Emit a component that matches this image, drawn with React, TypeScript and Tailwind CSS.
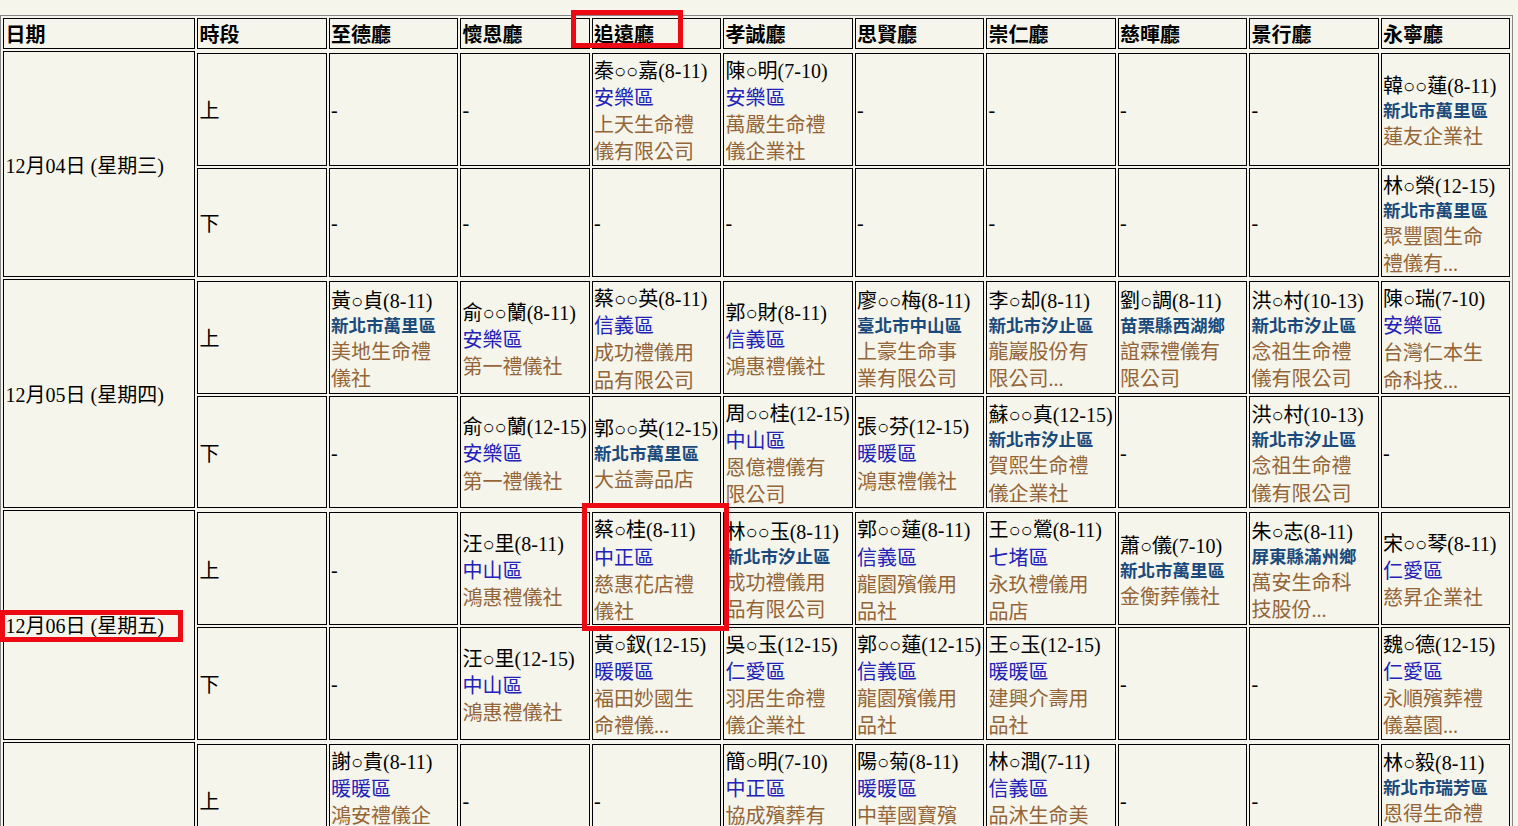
interface Booking {
  n: string
  d: string
  bold?: boolean
  c: string[]
}

type Cell = Booking | null

interface DayRow {
  date: string
  am: Cell[]
  pm?: Cell[]
}

const halls = ['至德廳', '懷恩廳', '追遠廳', '孝誠廳', '思賢廳', '崇仁廳', '慈暉廳', '景行廳', '永寧廳']

const days: DayRow[] = [
  {
    date: '12月04日 (星期三)',
    am: [
      null,
      null,
      { n: '秦○○嘉(8-11)', d: '安樂區', c: ['上天生命禮', '儀有限公司'] },
      { n: '陳○明(7-10)', d: '安樂區', c: ['萬嚴生命禮', '儀企業社'] },
      null,
      null,
      null,
      null,
      { n: '韓○○蓮(8-11)', d: '新北市萬里區', bold: true, c: ['蓮友企業社'] },
    ],
    pm: [
      null,
      null,
      null,
      null,
      null,
      null,
      null,
      null,
      { n: '林○榮(12-15)', d: '新北市萬里區', bold: true, c: ['聚豐園生命', '禮儀有...'] },
    ],
  },
  {
    date: '12月05日 (星期四)',
    am: [
      { n: '黃○貞(8-11)', d: '新北市萬里區', bold: true, c: ['美地生命禮', '儀社'] },
      { n: '俞○○蘭(8-11)', d: '安樂區', c: ['第一禮儀社'] },
      { n: '蔡○○英(8-11)', d: '信義區', c: ['成功禮儀用', '品有限公司'] },
      { n: '郭○財(8-11)', d: '信義區', c: ['鴻惠禮儀社'] },
      { n: '廖○○梅(8-11)', d: '臺北市中山區', bold: true, c: ['上豪生命事', '業有限公司'] },
      { n: '李○却(8-11)', d: '新北市汐止區', bold: true, c: ['龍巖股份有', '限公司...'] },
      { n: '劉○調(8-11)', d: '苗栗縣西湖鄉', bold: true, c: ['誼霖禮儀有', '限公司'] },
      { n: '洪○村(10-13)', d: '新北市汐止區', bold: true, c: ['念祖生命禮', '儀有限公司'] },
      { n: '陳○瑞(7-10)', d: '安樂區', c: ['台灣仁本生', '命科技...'] },
    ],
    pm: [
      null,
      { n: '俞○○蘭(12-15)', d: '安樂區', c: ['第一禮儀社'] },
      { n: '郭○○英(12-15)', d: '新北市萬里區', bold: true, c: ['大益壽品店'] },
      { n: '周○○桂(12-15)', d: '中山區', c: ['恩億禮儀有', '限公司'] },
      { n: '張○芬(12-15)', d: '暖暖區', c: ['鴻惠禮儀社'] },
      { n: '蘇○○真(12-15)', d: '新北市汐止區', bold: true, c: ['賀熙生命禮', '儀企業社'] },
      null,
      { n: '洪○村(10-13)', d: '新北市汐止區', bold: true, c: ['念祖生命禮', '儀有限公司'] },
      null,
    ],
  },
  {
    date: '12月06日 (星期五)',
    am: [
      null,
      { n: '汪○里(8-11)', d: '中山區', c: ['鴻惠禮儀社'] },
      { n: '蔡○桂(8-11)', d: '中正區', c: ['慈惠花店禮', '儀社'] },
      { n: '林○○玉(8-11)', d: '新北市汐止區', bold: true, c: ['成功禮儀用', '品有限公司'] },
      { n: '郭○○蓮(8-11)', d: '信義區', c: ['龍園殯儀用', '品社'] },
      { n: '王○○鶯(8-11)', d: '七堵區', c: ['永玖禮儀用', '品店'] },
      { n: '蕭○儀(7-10)', d: '新北市萬里區', bold: true, c: ['金衡葬儀社'] },
      { n: '朱○志(8-11)', d: '屏東縣滿州鄉', bold: true, c: ['萬安生命科', '技股份...'] },
      { n: '宋○○琴(8-11)', d: '仁愛區', c: ['慈昇企業社'] },
    ],
    pm: [
      null,
      { n: '汪○里(12-15)', d: '中山區', c: ['鴻惠禮儀社'] },
      { n: '黃○釵(12-15)', d: '暖暖區', c: ['福田妙國生', '命禮儀...'] },
      { n: '吳○玉(12-15)', d: '仁愛區', c: ['羽居生命禮', '儀企業社'] },
      { n: '郭○○蓮(12-15)', d: '信義區', c: ['龍園殯儀用', '品社'] },
      { n: '王○玉(12-15)', d: '暖暖區', c: ['建興介壽用', '品社'] },
      null,
      null,
      { n: '魏○德(12-15)', d: '仁愛區', c: ['永順殯葬禮', '儀墓園...'] },
    ],
  },
  {
    date: '',
    am: [
      { n: '謝○貴(8-11)', d: '暖暖區', c: ['鴻安禮儀企', ''] },
      null,
      null,
      { n: '簡○明(7-10)', d: '中正區', c: ['協成殯葬有', ''] },
      { n: '陽○菊(8-11)', d: '暖暖區', c: ['中華國寶殯', ''] },
      { n: '林○潤(7-11)', d: '信義區', c: ['品沐生命美', ''] },
      null,
      null,
      { n: '林○毅(8-11)', d: '新北市瑞芳區', bold: true, c: ['恩得生命禮', ''] },
    ],
  },
]

const cellCls = 'border border-black pl-[1.5px] py-[1px] align-middle text-left whitespace-nowrap'
const headCls = cellCls + " leading-[27px] font-bold font-['Noto_Sans_CJK_TC',sans-serif]"

function BookingCell({ cell }: { cell: Cell }) {
  if (!cell) return <td className={cellCls}><div className="mt-[1px] -mb-[1px]">-</div></td>
  return (
    <td className={cellCls}>
      <div className="mt-[3px] -mb-[3px]">
        <div className="leading-[27.15px] text-black">{cell.n}</div>
        {cell.bold ? (
          <div className="-mt-[1px] mb-[1px] text-[17.5px] leading-[24px] font-bold text-[#1b4a7c]">{cell.d}</div>
        ) : (
          <div className="leading-[27.15px] text-[#2222b8]">{cell.d}</div>
        )}
        {cell.c.map((line, i) => (
          <div key={i} className="leading-[27.15px] min-h-[27.15px] text-[#946538]">{line}</div>
        ))}
      </div>
    </td>
  )
}

function DayRows({ day }: { day: DayRow }) {
  const span = day.pm ? 3 : 2
  return (
    <>
      <tr>
        <td rowSpan={span} className={cellCls}><div className="mt-[1.5px] -mb-[1.5px]">{day.date}</div></td>
      </tr>
      <tr>
        <td className={cellCls}><div className="mt-[2px] -mb-[2px]">上</div></td>
        {day.am.map((c, i) => <BookingCell key={i} cell={c} />)}
      </tr>
      {day.pm && (
        <tr>
          <td className={cellCls}><div className="mt-[2px] -mb-[2px]">下</div></td>
          {day.pm.map((c, i) => <BookingCell key={i} cell={c} />)}
        </tr>
      )}
    </>
  )
}

export default function App() {
  return (
    <div className="relative h-[826px] overflow-hidden bg-[#f5f5eb] pt-[15px] font-['Liberation_Serif','Noto_Sans_CJK_TC',serif] text-[20px] text-black">
      <table className="w-[1513px] table-fixed border-separate border-spacing-[2px] border border-[#858585]">
        <colgroup>
          <col className="w-[192px]" />
        </colgroup>
        <thead>
          <tr>
            <th className={headCls}>日期</th>
            <th className={headCls}>時段</th>
            {halls.map(h => (
              <th key={h} className={headCls}>{h}</th>
            ))}
          </tr>
        </thead>
        <tbody>
          {days.map((d, i) => <DayRows key={i} day={d} />)}
        </tbody>
      </table>

      {/* red highlight boxes drawn over the table */}
      <div className="absolute left-[571px] top-[10px] w-[112px] h-[38px] border-[5px] border-[#ee0a14]" />
      <div className="absolute left-[582px] top-[503px] w-[147px] h-[128px] border-[5px] border-[#ee0a14]" />
      <div className="absolute left-0 top-[610px] w-[183px] h-[32px] border-[5px] border-[#ee0a14]" />
    </div>
  )
}
